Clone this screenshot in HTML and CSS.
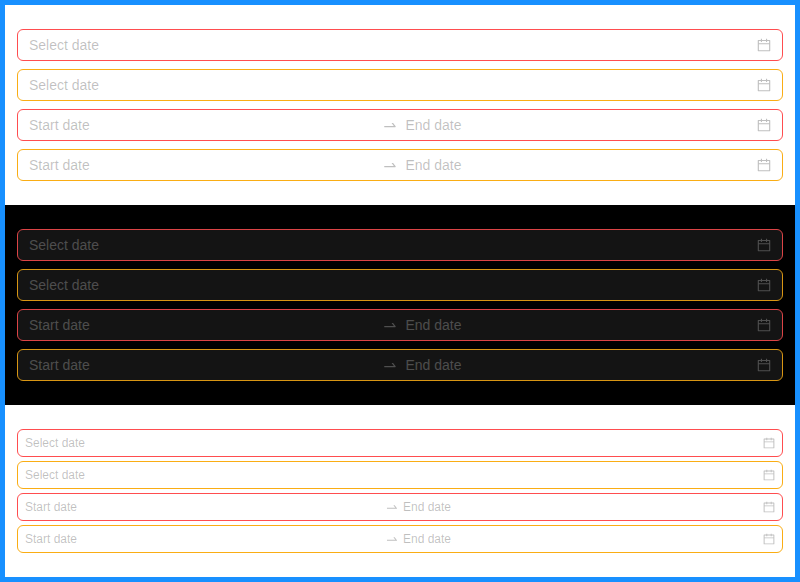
FILE: index.html
```html
<!DOCTYPE html>
<html lang="en">
<head>
<meta charset="utf-8">
<title>Date picker status</title>
<link rel="stylesheet" href="styles.css">
</head>
<body>
<svg width="0" height="0" class="defs">
<symbol id="cal" viewBox="64 64 896 896"><path d="M880 184H712v-64c0-4.400-3.600-8-8-8h-56c-4.400 0-8 3.600-8 8v64H384v-64c0-4.400-3.600-8-8-8h-56c-4.400 0-8 3.600-8 8v64H144c-17.700 0-32 14.300-32 32v664c0 17.700 14.300 32 32 32h736c17.700 0 32-14.300 32-32V216c0-17.700-14.300-32-32-32zm-40 656H184V460h656v380zM184 392V256h128v48c0 4.400 3.600 8 8 8h56c4.400 0 8-3.600 8-8v-48h256v48c0 4.400 3.600 8 8 8h56c4.400 0 8-3.600 8-8v-48h128v136H184z"/></symbol>
<symbol id="swap" viewBox="0 0 1024 1024"><path d="M873.100 596.200l-164-208A32 32 0 00684 376h-64.800c-6.700 0-10.400 7.700-6.300 13l144.300 183H152c-4.400 0-8 3.600-8 8v60c0 4.400 3.600 8 8 8h695.900c26.800 0 41.700-30.800 25.200-51.800z"/></symbol>
</svg>
<main>
<section class="panel">
<div class="picker error"><span class="text">Select date</span><svg class="cal"><use href="#cal"/></svg></div>
<div class="picker warning"><span class="text">Select date</span><svg class="cal"><use href="#cal"/></svg></div>
<div class="picker error"><span class="text">Start date</span><svg class="swap"><use href="#swap"/></svg><span class="text">End date</span><svg class="cal"><use href="#cal"/></svg></div>
<div class="picker warning"><span class="text">Start date</span><svg class="swap"><use href="#swap"/></svg><span class="text">End date</span><svg class="cal"><use href="#cal"/></svg></div>
</section>
<section class="panel dark">
<div class="picker error"><span class="text">Select date</span><svg class="cal"><use href="#cal"/></svg></div>
<div class="picker warning"><span class="text">Select date</span><svg class="cal"><use href="#cal"/></svg></div>
<div class="picker error"><span class="text">Start date</span><svg class="swap"><use href="#swap"/></svg><span class="text">End date</span><svg class="cal"><use href="#cal"/></svg></div>
<div class="picker warning"><span class="text">Start date</span><svg class="swap"><use href="#swap"/></svg><span class="text">End date</span><svg class="cal"><use href="#cal"/></svg></div>
</section>
<section class="panel compact">
<div class="picker error"><span class="text">Select date</span><svg class="cal"><use href="#cal"/></svg></div>
<div class="picker warning"><span class="text">Select date</span><svg class="cal"><use href="#cal"/></svg></div>
<div class="picker error"><span class="text">Start date</span><svg class="swap"><use href="#swap"/></svg><span class="text">End date</span><svg class="cal"><use href="#cal"/></svg></div>
<div class="picker warning"><span class="text">Start date</span><svg class="swap"><use href="#swap"/></svg><span class="text">End date</span><svg class="cal"><use href="#cal"/></svg></div>
</section>
</main>
</body>
</html>
```
FILE: styles.css
```css
* { box-sizing: border-box; }
body { margin: 0; }
.defs { display: none; }
main { height: 582px; border: 5px solid #1890ff; font-family: "Liberation Sans", Arial, sans-serif; }
.panel {
  --error: #ff4d4f; --warning: #faad14; --field: #fff; --ink: rgba(0, 0, 0, .25);
  display: flex; flex-direction: column; gap: 8px; height: 200px; padding: 24px 12px; background: #fff;
}
.dark { --error: #dc4446; --warning: #d89614; --field: #141414; --ink: rgba(255, 255, 255, .25); background: #000; }
.picker {
  display: flex; align-items: center; height: 32px; padding: 0 11px;
  border: 1px solid; border-radius: 6px; background: var(--field);
  color: var(--ink); font-size: 14px; line-height: 22px;
}
.error { border-color: var(--error); }
.warning { border-color: var(--warning); }
.text { flex: 1 1 0; }
.cal { width: 14px; height: 14px; margin-left: 7px; fill: currentColor; }
.swap { width: 16px; height: 16px; margin: 0 8px; fill: currentColor; }
.compact { gap: 4px; height: 172px; }
.compact .picker { height: 28px; padding: 0 7px; font-size: 12px; line-height: 20px; }
.compact .cal { width: 12px; height: 12px; margin-left: 4px; }
.compact .swap { width: 14px; height: 14px; margin: 0 4px; }
```
